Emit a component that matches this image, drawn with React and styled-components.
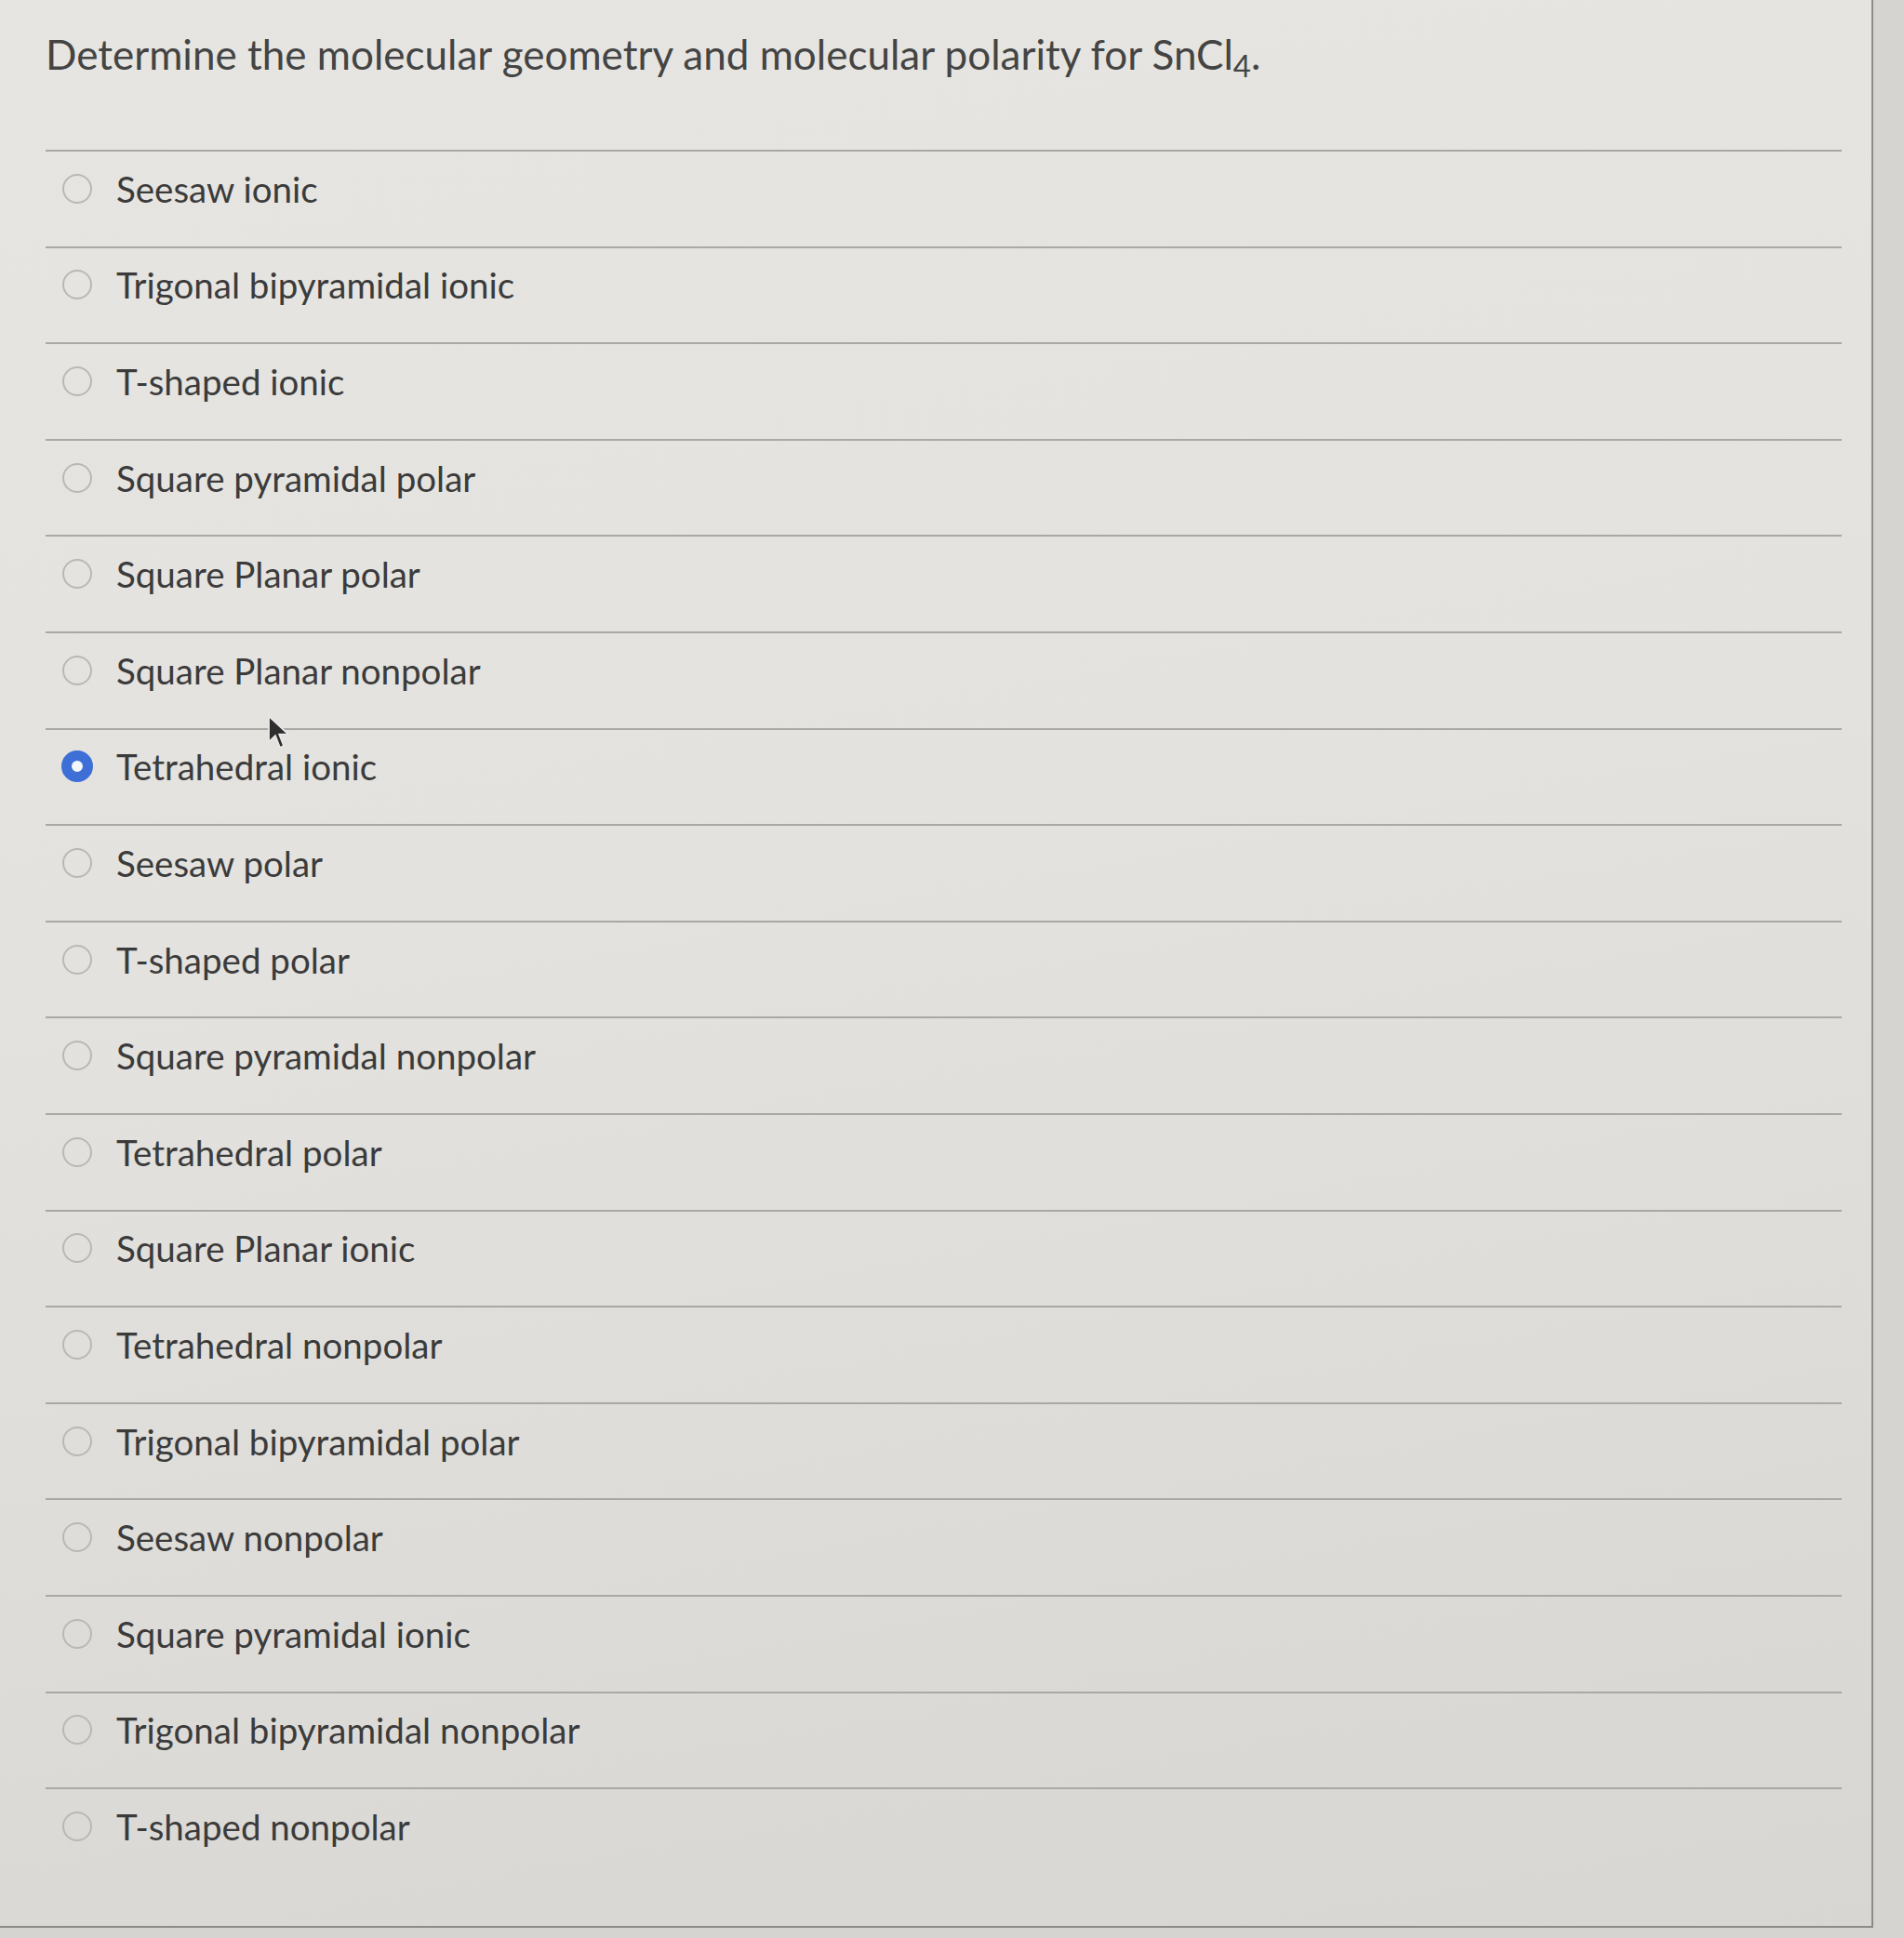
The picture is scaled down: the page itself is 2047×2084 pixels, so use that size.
import React from 'react';
import styled, { createGlobalStyle } from 'styled-components';

const GlobalStyle = createGlobalStyle`
  html, body {
    margin: 0;
    padding: 0;
  }
  body {
    width: 2047px;
    height: 2084px;
    overflow: hidden;
    background: #d6d4d0;
    font-family: Lato, "Open Sans", sans-serif;
  }
`;

const Panel = styled.div`
  position: relative;
  box-sizing: border-box;
  width: 2014px;
  height: 2073px;
  padding: 0 32px 0 49px;
  background: linear-gradient(170deg, #e6e5e1 0%, #e3e2de 45%, #d8d6d2 100%);
  border-right: 2px solid #8c8b88;
  border-bottom: 2px solid #8c8b88;
`;

const Title = styled.h1`
  margin: 0;
  padding: 28px 0 0;
  height: 161px;
  box-sizing: border-box;
  font-size: 44px;
  font-weight: 400;
  line-height: 60px;
  color: #444444;
  letter-spacing: 0;

  sub {
    font-size: 0.75em;
    vertical-align: -0.25em;
    line-height: 0;
  }
`;

const OptionList = styled.ul`
  list-style: none;
  margin: 0;
  padding: 0;
`;

const OptionRow = styled.li`
  display: flex;
  align-items: center;
  gap: 26px;
  box-sizing: border-box;
  height: 103.6px;
  padding: 0 0 22px 17px;
  border-top: 2px solid #a9a8a4;
`;

const Radio = styled.span`
  flex: none;
  box-sizing: border-box;
  width: ${p => (p.$checked ? 34 : 32)}px;
  height: ${p => (p.$checked ? 34 : 32)}px;
  border-radius: 50%;
  border: ${p => (p.$checked ? '11px solid #3d6fd6' : '2px solid #b9b8b5')};
  background: ${p => (p.$checked ? '#f4f6fb' : 'transparent')};
  margin-left: ${p => (p.$checked ? 0 : 1)}px;
  margin-right: ${p => (p.$checked ? -1 : 0)}px;
`;

const Label = styled.span`
  font-size: 38.5px;
  line-height: 46px;
  color: #3b3b3b;
`;

const Cursor = styled.svg`
  position: absolute;
  left: 287px;
  top: 768px;
  width: 26px;
  height: 40px;
`;

const options = [
  'Seesaw ionic',
  'Trigonal bipyramidal ionic',
  'T-shaped ionic',
  'Square pyramidal polar',
  'Square Planar polar',
  'Square Planar nonpolar',
  'Tetrahedral ionic',
  'Seesaw polar',
  'T-shaped polar',
  'Square pyramidal nonpolar',
  'Tetrahedral polar',
  'Square Planar ionic',
  'Tetrahedral nonpolar',
  'Trigonal bipyramidal polar',
  'Seesaw nonpolar',
  'Square pyramidal ionic',
  'Trigonal bipyramidal nonpolar',
  'T-shaped nonpolar',
];

const selected = 'Tetrahedral ionic';

export default function App() {
  return (
    <>
      <GlobalStyle />
      <Panel>
        <Title>
          Determine the molecular geometry and molecular polarity for SnCl<sub>4</sub>.
        </Title>
        <OptionList>
          {options.map(opt => (
            <OptionRow key={opt}>
              <Radio $checked={opt === selected} />
              <Label>{opt}</Label>
            </OptionRow>
          ))}
        </OptionList>
        <Cursor viewBox="0 0 13 20">
          <path d="M1 1 L1 15 L4.5 11.5 L7 18 L9 17 L6.6 10.8 L11.5 10.8 Z" fill="#2e2e2e" stroke="#e8e8e8" strokeWidth="0.9" />
        </Cursor>
      </Panel>
    </>
  );
}
